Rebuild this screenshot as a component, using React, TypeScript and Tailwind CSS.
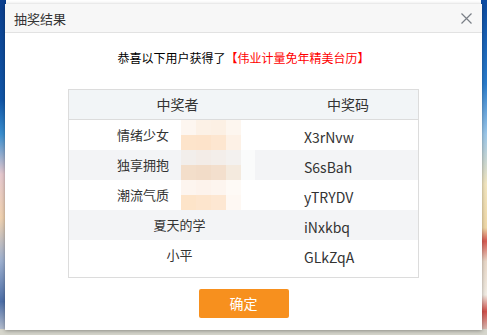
import React from "react";

const rows = [
  { name: "情绪少女", code: "X3rNvw", blur: true },
  { name: "独享拥抱", code: "S6sBah", blur: true },
  { name: "潮流气质", code: "yTRYDV", blur: true },
  { name: "夏天的学", code: "iNxkbq", blur: false },
  { name: "小平", code: "GLkZqA", blur: false },
];

export default function App() {
  return (
    <div
      className="relative w-[487px] h-[335px] overflow-hidden"
      style={{ fontFamily: '"Noto Sans CJK SC", "Microsoft YaHei", sans-serif' }}
    >
      {/* background */}
      <div className="absolute inset-0 flex">
        <div className="w-[6px] h-full bg-[linear-gradient(180deg,#0b3f8e_0%,#1156a8_30%,#3a8fd0_40%,#e6c9cf_52%,#f0d2b0_65%,#9db0d0_78%,#4d6fa8_90%,#c9cdd6_100%)]" />
        <div className="flex-1" />
        <div className="w-[6px] h-full bg-[linear-gradient(180deg,#0b4aa0_0%,#2a7ccc_25%,#9cc8ea_40%,#f3e6c0_55%,#f0d9a8_68%,#d65a52_72%,#e9d8c8_78%,#f2ede4_88%,#d0504a_93%,#dcdcd4_100%)]" />
      </div>
      <div className="absolute left-0 right-0 bottom-0 h-[6px] bg-[#d6d6cc]" />

      {/* dialog */}
      <div className="absolute left-[5px] top-[4px] w-[477px] h-[326px] bg-white shadow-[0_1px_4px_rgba(0,0,0,0.35)] flex flex-col">
        <div className="h-[29px] bg-[#f7f7f7] border-b border-[#e2e2e2] flex items-center justify-between pl-[9px] pr-[10px]">
          <span className="text-[13px] text-[#333] leading-none">抽奖结果</span>
          <svg width="11" height="11" viewBox="0 0 11 11">
            <path d="M0.5 0.5 L10.5 10.5 M10.5 0.5 L0.5 10.5" stroke="#7a7f86" strokeWidth="1.2" />
          </svg>
        </div>

        <div className="mt-[17px] text-center text-[12px] leading-[16px] text-black">
          恭喜以下用户获得了<span className="text-[#ff0000]">【伟业计量免年精美台历】</span>
        </div>

        <div className="relative mx-auto mt-[23px] w-[351px] border border-[#dcdcdc] pb-[7px]">
          <div className="grid grid-cols-[219px_130px] h-[30px] items-center bg-[#f2f5f7] border-b border-[#dcdcdc] text-[14px] text-[#333]">
            <div className="text-center pr-[2px]">中奖者</div>
            <div className="text-center pr-[10px]">中奖码</div>
          </div>
          {rows.map((r, i) => (
            <div
              key={i}
              className={`grid grid-cols-[219px_130px] h-[30px] items-center text-[13px] text-[#333] ${i % 2 === 1 ? "bg-[#f3f4f6]" : "bg-white"}`}
            >
              <div className={r.blur ? "pl-[48px] -mt-[1px]" : "text-center pl-[2px] -mt-[1px]"}>{r.name}</div>
              <div className="pl-[16px] text-[14px] text-[#333] mt-[5px]">{r.code}</div>
            </div>
          ))}
          {/* mosaic overlay */}
          <div className="absolute left-[112px] top-[30px] w-[60px] h-[90px] grid grid-cols-4 grid-rows-6 opacity-90">
            {[
              "#fdf6ef", "#fcf0e4", "#fcefe2", "#fdf6ee",
              "#fde2c6", "#fde1c5", "#fde4cc", "#fdf0e4",
              "#f2eeea", "#f3ece6", "#f3eee9", "#f3f1ef",
              "#f4dcc6", "#f2dac4", "#f3ddc9", "#f5e9dc",
              "#fdf5ee", "#fdf2ea", "#fdf5ee", "#fefaf6",
              "#fde2c4", "#fde3c8", "#fde5ce", "#fef8f2",
            ].map((c, k) => (
              <div key={k} style={{ backgroundColor: c }} />
            ))}
          </div>
          <div className="absolute left-[172px] top-[32px] w-[14px] h-[86px] bg-white/60 rounded-r-full" />
          <div className="absolute left-[160px] top-[155px] w-[30px] h-[24px] bg-white/70 rounded-b-full" />
        </div>

        <div className="flex justify-center mt-[11px]">
          <button className="w-[90px] h-[29px] rounded-[2px] bg-[#f7901e] text-white text-[14px]">
            确定
          </button>
        </div>
      </div>
    </div>
  );
}
